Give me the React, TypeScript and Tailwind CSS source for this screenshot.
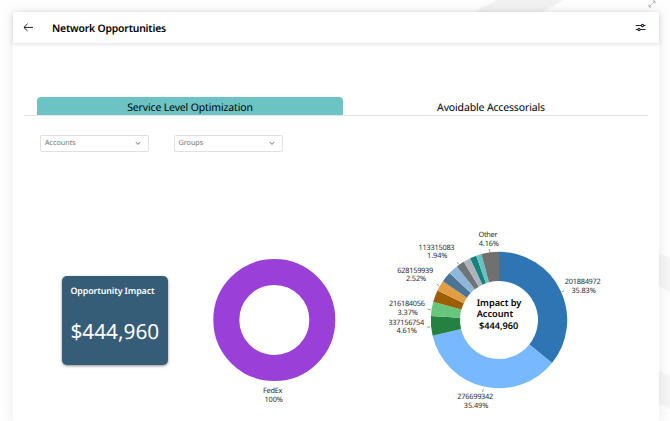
import * as React from "react"

interface Slice {
  share: number
  color: string
}

interface ChartLabel {
  name: string
  value: string
  x: number
  y: number
  width: number
  valueX?: number
  tick?: [number, number, number, number]
}

const ACCOUNT_SLICES: Slice[] = [
  { share: 35.83, color: "#2e75b4" },
  { share: 35.49, color: "#78b8ff" },
  { share: 4.61, color: "#23823f" },
  { share: 3.37, color: "#68c57c" },
  { share: 2.8, color: "#9c5e02" },
  { share: 2.52, color: "#e39e45" },
  { share: 2.48, color: "#4b7593" },
  { share: 2.3, color: "#8fb7d9" },
  { share: 1.94, color: "#6b7479" },
  { share: 1.7, color: "#adb3b8" },
  { share: 1.53, color: "#16817d" },
  { share: 1.27, color: "#67c3c3" },
  { share: 4.16, color: "#70706e" },
]

// Positions are in the 230x190 canvas of the account chart
const ACCOUNT_LABELS: ChartLabel[] = [
  { name: "Other", value: "4.16%", x: 99, y: 16.3, width: 19, valueX: 99.8, tick: [100, 28, 101, 31] },
  { name: "113315083", value: "1.94%", x: 47.6, y: 28.8, width: 36, valueX: 48.2, tick: [68, 41, 70, 43.5] },
  { name: "628159939", value: "2.52%", x: 26.3, y: 51.7, width: 36, valueX: 27, tick: [47.5, 63, 50.5, 65] },
  { name: "216184056", value: "3.37%", x: 18, y: 85.3, width: 36, valueX: 18.7, tick: [38.5, 88.2, 42, 88.9] },
  { name: "337156754", value: "4.61%", x: 17.3, y: 103.7, width: 36, valueX: 17.7, tick: [38, 106.3, 41.5, 105.8] },
  { name: "201884972", value: "35.83%", x: 193.8, y: 63.3, width: 36, valueX: 194.6, tick: [172.8, 70.8, 175, 69.8] },
  { name: "276699342", value: "35.49%", x: 86.3, y: 177.9, width: 36, valueX: 87, tick: [94.3, 168, 93.6, 171] },
]

export default function App() {
  return (
    <div className="relative h-[421px] w-[670px] overflow-hidden bg-[#fefefe] font-['Noto_Sans',sans-serif] text-black [text-rendering:geometricPrecision]">
      <Backdrop />
      <div className="relative ml-[13px] flex h-full w-[646px] flex-col pt-3">
        <main className="flex flex-1 flex-col bg-white shadow-[0_0_12px_rgba(0,0,0,0.09)]">
          <Header />
          <Tabs />
          <div className="mt-[19px] flex gap-[24.5px] pl-[27px]">
            <Select label="Accounts" />
            <Select label="Groups" />
          </div>
          <div className="mt-[69px] flex items-start pl-[49.4px]">
            <ImpactCard />
            <CarrierChart />
            <AccountChart />
          </div>
        </main>
      </div>
    </div>
  )
}

function Backdrop() {
  return (
    <svg className="absolute inset-0" width="670" height="421" fill="#f2f2f2">
      <path d="M497 0H564L539 14H471Z" />
      <path d="M659 253L670 258V292L659 286Z" fill="#f5f5f5" />
      <path d="M659 371L670 376V409L659 404Z" fill="#f5f5f5" />
      <g stroke="#b5b5b5" strokeWidth="1" fill="none">
        <path d="M652.5 3.5L655 1M652.7 1H655V3.3M651.5 4.5L649 7M649 4.7V7H651.3" />
      </g>
    </svg>
  )
}

function Header() {
  return (
    <header className="flex h-[30.5px] shrink-0 items-center pr-[13px] pl-[10px] shadow-[0_1px_5px_rgba(0,0,0,0.13)]">
      <svg width="11" height="10" viewBox="0 0 11 10" fill="none" stroke="#222" strokeWidth="1">
        <path d="M10 5.4H1M4.6 1.8L0.9 5.4L4.6 9" />
      </svg>
      <h1 className="ml-[18px] pt-[3px] text-[10.4px] leading-4 font-semibold tracking-[-0.18px]">Network Opportunities</h1>
      <svg className="ml-auto" width="11" height="10" viewBox="0 0 11 10" fill="none" stroke="#1f2a2e" strokeWidth="1.1">
        <path d="M0.8 3.5H6M8.5 3.5H10.5M0.8 7.5H3M5 7.5H10.5" />
        <circle cx="7.5" cy="3.5" r="1.1" />
        <circle cx="4" cy="7.5" r="1.1" />
      </svg>
    </header>
  )
}

function Tabs() {
  return (
    <div className="mx-[11px] mt-[54.5px] flex h-[19px] shrink-0 border-b border-[#e3e5e6] pl-[13px] text-[10.5px] leading-[22px] tracking-[-0.15px]">
      <div className="h-[18px] w-[306px] rounded-t-[4px] bg-[#6bc4c3] text-center">Service Level Optimization</div>
      <div className="w-[296px] text-center">Avoidable Accessorials</div>
    </div>
  )
}

function Select({ label }: { label: string }) {
  return (
    <div className="flex h-[17px] w-[109px] items-center justify-between rounded-[2px] border border-[#dfe1e2] pr-[7px] pl-1 text-[7.2px] text-[#747474]">
      <span>{label}</span>
      <svg width="6" height="5" viewBox="0 0 6 5" fill="none" stroke="#777" strokeWidth="1">
        <path d="M0.8 1L3 3.4L5.2 1" />
      </svg>
    </div>
  )
}

function ImpactCard() {
  return (
    <section className="mt-[55px] h-[88.5px] w-[106px] rounded-[5px] bg-[#355d77] pt-[8px] pl-[8px] text-white shadow-[0_1px_3px_rgba(0,0,0,0.45)]">
      <h2 className="text-[8.9px] leading-[14px] font-semibold tracking-[-0.12px] whitespace-nowrap">Opportunity Impact</h2>
      <p className="mt-[20px] text-[20.8px] leading-[28px]">$444,960</p>
    </section>
  )
}

function CarrierChart() {
  return (
    <svg className="mt-[30px] ml-[40.6px]" width="130" height="160" viewBox="0 0 130 160">
      <circle cx="65.3" cy="69" r="48" fill="none" stroke="#9a40d8" strokeWidth="26" />
      <Label name="FedEx" value="100%" x={63.7} y={142} width={19.5} valueX={64.7} />
    </svg>
  )
}

function AccountChart() {
  let start = 0
  return (
    <svg className="ml-[50px]" width="230" height="190" viewBox="0 0 230 190">
      {ACCOUNT_SLICES.map((slice) => {
        const path = arcPath(110, 99, 39, 68.2, start, start + slice.share)
        start += slice.share
        return <path key={slice.color} d={path} fill={slice.color} />
      })}
      {ACCOUNT_LABELS.map((label) => (
        <Label key={label.name} {...label} />
      ))}
      <g fontSize="9.2" fontWeight="600">
        <text x="87.7" y="85.2">Impact by</text>
        <text x="87.7" y="96.4">Account</text>
        <text x="90" y="107.6">$444,960</text>
      </g>
    </svg>
  )
}

function Label({ name, value, x, y, width, valueX, tick }: ChartLabel) {
  return (
    <g fill="#2b2b2b" fontSize="7.4" textAnchor="middle">
      <text x={x} y={y} textLength={width}>{name}</text>
      <text x={valueX ?? x} y={y + 8.6} letterSpacing="-0.12">{value}</text>
      {tick && <line x1={tick[0]} y1={tick[1]} x2={tick[2]} y2={tick[3]} stroke="#777" strokeWidth="0.7" />}
    </g>
  )
}

// from and to are percentages of the full ring, clockwise from the top
function arcPath(cx: number, cy: number, inner: number, outer: number, from: number, to: number) {
  const point = (r: number, pct: number) => {
    const angle = (pct / 100) * Math.PI * 2
    return `${(cx + r * Math.sin(angle)).toFixed(2)} ${(cy - r * Math.cos(angle)).toFixed(2)}`
  }
  const large = to - from > 50 ? 1 : 0
  return `M${point(outer, from)}A${outer} ${outer} 0 ${large} 1 ${point(outer, to)}L${point(inner, to)}A${inner} ${inner} 0 ${large} 0 ${point(inner, from)}Z`
}
